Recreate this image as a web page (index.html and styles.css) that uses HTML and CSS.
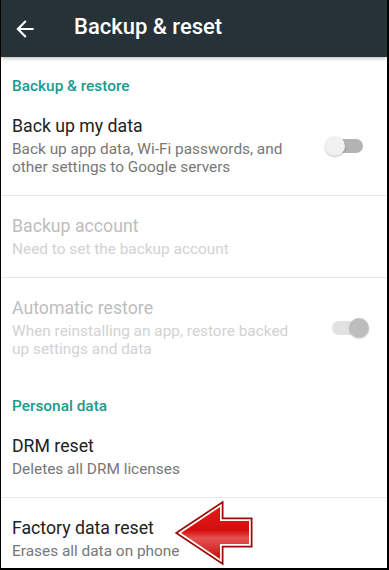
FILE: index.html
```html
<!DOCTYPE html>
<html>
<head>
<meta charset="utf-8">
<link rel="stylesheet" href="styles.css">
</head>
<body>
<div class="frame">
  <header class="toolbar">
    <svg class="back" viewBox="0 0 24 24" width="26" height="26"><path d="M20 11H7.83l5.59-5.59L12 4l-8 8 8 8 1.41-1.41L7.83 13H20v-2z" fill="#fff"/></svg>
    <h1 class="title">Backup &amp; reset</h1>
  </header>

  <div class="section-head">Backup &amp; restore</div>

  <div class="row">
    <div class="text">
      <div class="row-title">Back up my data</div>
      <div class="row-sub">Back up app data, Wi-Fi passwords, and<br>other settings to Google servers</div>
    </div>
    <div class="switch off"><span class="track"></span><span class="thumb"></span></div>
  </div>

  <div class="row disabled">
    <div class="text">
      <div class="row-title">Backup account</div>
      <div class="row-sub">Need to set the backup account</div>
    </div>
  </div>

  <div class="row disabled nodiv">
    <div class="text">
      <div class="row-title">Automatic restore</div>
      <div class="row-sub">When reinstalling an app, restore backed<br>up settings and data</div>
    </div>
    <div class="switch on"><span class="track"></span><span class="thumb"></span></div>
  </div>

  <div class="section-head">Personal data</div>

  <div class="row">
    <div class="text">
      <div class="row-title">DRM reset</div>
      <div class="row-sub">Deletes all DRM licenses</div>
    </div>
  </div>

  <div class="row nodiv">
    <div class="text">
      <div class="row-title">Factory data reset</div>
      <div class="row-sub">Erases all data on phone</div>
    </div>
  </div>

  <svg class="arrow" viewBox="174 498 84 70" width="84" height="70">
    <defs>
      <linearGradient id="rg" x1="0" y1="0" x2="0" y2="1">
        <stop offset="0" stop-color="#e41a1a"/>
        <stop offset="0.45" stop-color="#d40d0d"/>
        <stop offset="0.6" stop-color="#e65252"/>
        <stop offset="0.8" stop-color="#d83030"/>
        <stop offset="1" stop-color="#c00808"/>
      </linearGradient>
    </defs>
    <polygon points="181,533 220,507 220,521 249,521 249,544 220,544 220,559" fill="none" stroke="#9e0a0a" stroke-width="7" stroke-linejoin="miter"/>
    <polygon points="181,533 220,507 220,521 249,521 249,544 220,544 220,559" fill="none" stroke="#fff" stroke-width="3.5" stroke-linejoin="miter"/>
    <polygon points="181,533 220,507 220,521 249,521 249,544 220,544 220,559" fill="url(#rg)"/>
  </svg>
</div>
</body>
</html>
```
FILE: styles.css
```css
html, body {
  margin: 0;
  padding: 0;
  background: #fff;
}
.frame {
  position: relative;
  width: 389px;
  height: 570px;
  box-sizing: border-box;
  border-left: 1px solid #000;
  border-right: 2px solid #000;
  border-bottom: 2px solid #000;
  overflow: hidden;
  font-family: Roboto, "Noto Sans", sans-serif;
  background: #fff;
}
.toolbar {
  position: relative;
  z-index: 1;
  height: 57px;
  background: #263238;
  display: flex;
  align-items: center;
  box-shadow: 0 1px 4px rgba(0,0,0,0.3);
}
.back {
  margin-left: 11px;
  margin-top: 1px;
  flex: none;
}
.title {
  margin: 0 0 0 36px;
  font-size: 22px;
  font-weight: 500;
  color: #fff;
  line-height: 24px;
  margin-top: -3px;
}
.section-head {
  height: 39px;
  box-sizing: border-box;
  padding: 20px 11px 0;
  line-height: 18px;
  font-size: 15.4px;
  font-weight: 500;
  color: #1c9a8c;
}
.row {
  display: flex;
  align-items: center;
  padding: 19px 0 19px 11px;
  border-bottom: 1px solid #e9e9e9;
}
.row.nodiv {
  border-bottom: none;
}
.text {
  flex: 1;
}
.row-title {
  font-size: 17.7px;
  line-height: 22px;
  color: #212121;
}
.row-sub {
  margin-top: 3px;
  font-size: 15.4px;
  line-height: 18px;
  color: #777;
}
.disabled .row-title {
  color: #bdbdbd;
}
.disabled .row-sub {
  color: #d2d2d2;
}
.switch {
  position: relative;
  width: 46px;
  height: 22px;
  margin-right: 17px;
  flex: none;
}
.track {
  position: absolute;
  top: 4px;
  height: 14px;
  width: 35px;
  border-radius: 7px;
}
.thumb {
  position: absolute;
  top: 1px;
  width: 20px;
  height: 20px;
  border-radius: 50%;
  box-shadow: 0 1px 2px rgba(0,0,0,0.25);
}
.switch.off .track {
  left: 4px;
  background: #b3b3b3;
}
.switch.off .thumb {
  left: 1px;
  background: #f1f1f1;
}
.switch.on .track {
  left: 8px;
  background: #e2e2e2;
}
.switch.on .thumb {
  left: 25px;
  background: #bdbdbd;
  box-shadow: 0 1px 2px rgba(0,0,0,0.15);
}
.arrow {
  position: absolute;
  left: 173px;
  top: 498px;
}
```
